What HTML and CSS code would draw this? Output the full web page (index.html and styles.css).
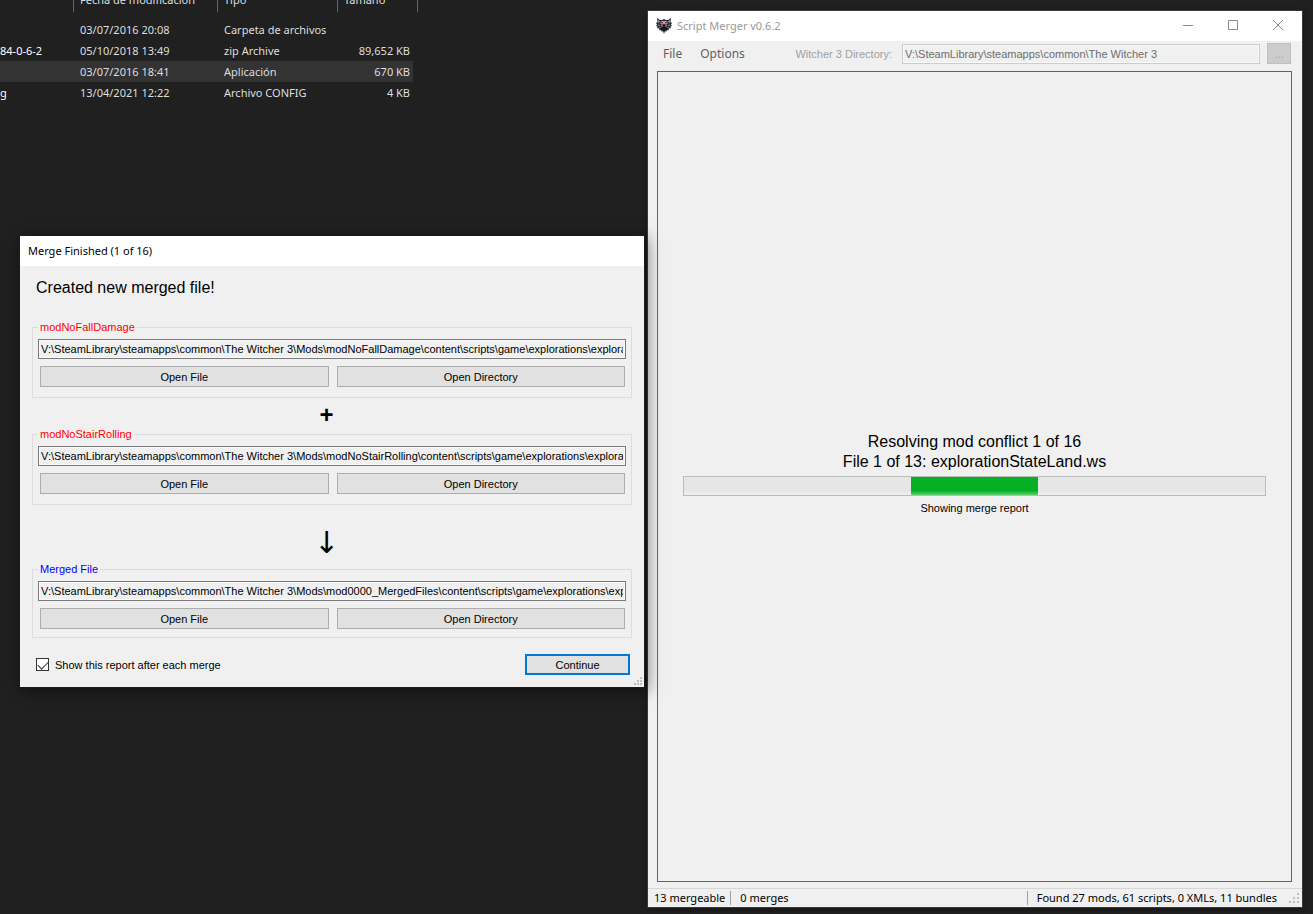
FILE: index.html
```html
<!DOCTYPE html>
<html lang="en">
<head>
<meta charset="UTF-8">
<title>Script Merger</title>
<link rel="stylesheet" href="styles.css">
</head>
<body>

<!-- file explorer -->
<div class="explorer">
	<table class="files">
		<colgroup><col class="col-name"><col class="col-date"><col class="col-type"><col class="col-size"></colgroup>
		<thead>
			<tr><th></th><th>Fecha de modificación</th><th>Tipo</th><th>Tamaño</th></tr>
		</thead>
		<tbody>
			<tr><td></td><td>03/07/2016 20:08</td><td>Carpeta de archivos</td><td></td></tr>
			<tr><td>84-0-6-2</td><td>05/10/2018 13:49</td><td>zip Archive</td><td>89,652 KB</td></tr>
			<tr class="selected"><td></td><td>03/07/2016 18:41</td><td>Aplicación</td><td>670 KB</td></tr>
			<tr><td>g</td><td>13/04/2021 12:22</td><td>Archivo CONFIG</td><td>4 KB</td></tr>
		</tbody>
	</table>
</div>

<!-- main window -->
<main class="window merger">
	<header class="titlebar inactive">
		<svg class="wolf" viewBox="0 0 16 16" width="16" height="16">
			<path fill="#2b2d35" d="M1 0l3 2 2 0 2-1 2 1h2l3-2-.5 4 1.500 1-1 1.500 1 1.500-1.500.5.5 2-2-.5-.5 2.500-1.500-.5L10 14l-1-1-1 3-1-3-1 1-1-2-1.500.5L3 10l-2 .5.5-2L0 8l1-1.500L0 5l1.500-1z"/>
			<path fill="#c5c9d2" d="M2 2l2 1.500L2.500 5zM14 2l-2 1.500L13.500 5zM5 3h2l1 1 1-1h2l-1 1H6zM1.500 6.500L5 8l-3-.5zM14.500 6.500L11 8l3-.5zM6 7l1 2-2-1zM10 7L9 9l2-1zM3 9l2 .5-1 .5zM13 9l-2 .5 1 .5z"/>
			<path fill="#e8646a" d="M3.500 5L6 4.500h4l2.500.5L10 7 8 5.500 6 7z"/>
			<path fill="#f3d4d6" d="M7 4h2L8 6z"/>
			<path fill="#0d0e12" d="M7 7h2l.5 4L8 13l-1.500-2zM4 10l2 0 0 2zM12 10h-2v2z"/>
		</svg>
		<span>Script Merger v0.6.2</span>
		<div class="captions">
			<button aria-label="Minimize"><svg width="12" height="12" viewBox="0 0 12 12"><path d="M1 6.500h10"/></svg></button>
			<button aria-label="Maximize"><svg width="12" height="12" viewBox="0 0 12 12"><path d="M1.500 1.500h9v9h-9z"/></svg></button>
			<button aria-label="Close"><svg width="12" height="12" viewBox="0 0 12 12"><path d="M1 1l10 10M11 1L1 11"/></svg></button>
		</div>
	</header>
	<div class="menubar">
		<button class="menu">File</button>
		<button class="menu">Options</button>
		<label for="gamedir">Witcher 3 Directory:</label>
		<input id="gamedir" class="path" type="text" value="V:\SteamLibrary\steamapps\common\The Witcher 3" disabled>
		<button class="browse" disabled>...</button>
	</div>
	<section class="panel">
		<p class="big">Resolving mod conflict 1 of 16</p>
		<p class="big">File 1 of 13: explorationStateLand.ws</p>
		<div class="progress" role="progressbar" aria-label="Merge progress"><div class="chunk"></div></div>
		<p>Showing merge report</p>
	</section>
	<footer class="statusbar">
		<span>13 mergeable</span>
		<span class="sep">0 merges</span>
		<span class="sep found">Found 27 mods, 61 scripts, 0 XMLs, 11 bundles</span>
		<svg class="grip" width="11" height="11" viewBox="0 0 11 11"><path d="M8 0h2v2H8zM4 4h2v2H4zM8 4h2v2H8zM0 8h2v2H0zM4 8h2v2H4zM8 8h2v2H8z"/></svg>
	</footer>
</main>

<!-- report dialog -->
<div class="window report" role="dialog" aria-labelledby="report-title">
	<header class="titlebar"><span id="report-title">Merge Finished (1 of 16)</span></header>
	<form class="content">
		<h1>Created new merged file!</h1>
		<fieldset>
			<legend>modNoFallDamage</legend>
			<input class="path" type="text" aria-label="First file" readonly value="V:\SteamLibrary\steamapps\common\The Witcher 3\Mods\modNoFallDamage\content\scripts\game\explorations\explorationStateLand.ws">
			<div class="buttons">
				<button type="button">Open File</button>
				<button type="button">Open Directory</button>
			</div>
		</fieldset>
		<div class="plus">+</div>
		<fieldset>
			<legend>modNoStairRolling</legend>
			<input class="path" type="text" aria-label="Second file" readonly value="V:\SteamLibrary\steamapps\common\The Witcher 3\Mods\modNoStairRolling\content\scripts\game\explorations\explorationStateLand.ws">
			<div class="buttons">
				<button type="button">Open File</button>
				<button type="button">Open Directory</button>
			</div>
		</fieldset>
		<div class="arrow">↓</div>
		<fieldset class="merged">
			<legend>Merged File</legend>
			<input class="path" type="text" aria-label="Merged file" readonly value="V:\SteamLibrary\steamapps\common\The Witcher 3\Mods\mod0000_MergedFiles\content\scripts\game\explorations\explorationStateLand.ws">
			<div class="buttons">
				<button type="button">Open File</button>
				<button type="button">Open Directory</button>
			</div>
		</fieldset>
		<div class="bottom">
			<label><input type="checkbox" checked>Show this report after each merge</label>
			<button type="button" class="default">Continue</button>
		</div>
	</form>
	<svg class="grip" width="9" height="9" viewBox="0 0 9 9"><path d="M6 0h2v2H6zM3 3h2v2H3zM6 3h2v2H6zM0 6h2v2H0zM3 6h2v2H3zM6 6h2v2H6z"/></svg>
</div>

</body>
</html>
```
FILE: styles.css
```css
* {
  box-sizing: border-box;
}
body {
  margin: 0;
  height: 100vh;
  overflow: hidden;
  position: relative;
  background-color: #202020;
  font: 11px/14px "Liberation Sans", Arial, sans-serif;
  color: #000;
}
button, input {
  font: inherit;
  color: inherit;
}
p, h1 {
  margin: 0;
}

/* file explorer */
.explorer {
  overflow: hidden;
}
.files {
  width: 418px;
  margin-top: -13px;
  table-layout: fixed;
  border-collapse: separate;
  border-spacing: 0;
  font: 11px/20px "Noto Sans", "Open Sans", sans-serif;
  color: #dedede;
}
.col-name { width: 74px; }
.col-date { width: 144px; }
.col-type { width: 120px; }
.files th {
  height: 25px;
  padding: 0 0 0 6px;
  border-right: 1px solid #636363;
  font-weight: normal;
  text-align: left;
  white-space: nowrap;
}
.files tbody::before {
  content: "";
  display: block;
  height: 7px;
}
.files td {
  height: 21px;
  padding: 0 0 0 6px;
  white-space: nowrap;
}
.files td:first-child {
  padding-left: 0;
  color: #fff;
}
.files td:last-child {
  padding-right: 3px;
  border-right: 5px solid #202020;
  text-align: right;
}
.selected {
  background-color: #333;
}

/* windows */
.window {
  position: absolute;
  display: flex;
  flex-direction: column;
  background-color: #f0f0f0;
}
.merger {
  top: 11px;
  right: 11px;
  bottom: 7px;
  left: 648px;
  box-shadow: 0 0 0 1px #3a3a3a, 0 2px 8px #0006;
}
.report {
  top: 236px;
  left: 20px;
  width: 624px;
  box-shadow: 0 0 0 1px #1c1c1c, 2px 3px 14px 1px #0008;
}
.titlebar {
  display: flex;
  align-items: center;
  height: 30px;
  padding-left: 8px;
  background-color: #fff;
  font-family: "Noto Sans", "Open Sans", sans-serif;
}
.inactive {
  color: #999;
}
.wolf {
  margin-right: 5px;
}
.captions {
  display: flex;
  margin-left: auto;
  padding: 0 2px 2px 0;
}
.captions button {
  width: 45px;
  height: 28px;
  padding: 0;
  border: 0;
  background: none;
}
.captions svg {
  display: block;
  margin: auto;
  fill: none;
  stroke: #888;
}
.path {
  display: block;
  width: 100%;
  height: 20px;
  padding: 0 2px;
  border: 1px solid #7a7a7a;
  background-color: #f0f0f0;
  box-shadow: inset 0 0 0 1px #fafafa;
}
.grip {
  fill: #bfbfbf;
}

/* main window */
.menubar {
  display: flex;
  align-items: center;
  height: 30px;
  padding: 0 11px 5px 6px;
}
.menu {
  padding: 0 9px;
  border: 0;
  background: none;
  font: 12px/18px "Noto Sans", "Open Sans", sans-serif;
  color: #5f5f5f;
}
.menubar label {
  margin-left: auto;
  padding-right: 10px;
  color: #a0a0a0;
}
.menubar .path {
  width: 358px;
  border-color: #ccc;
  color: #6d6d6d;
}
.browse {
  width: 24px;
  height: 21px;
  margin-left: 7px;
  padding: 0;
  border: 1px solid #bfbfbf;
  background-color: #ccc;
  color: #a0a0a0;
}
.panel {
  flex: 1;
  display: flex;
  flex-direction: column;
  justify-content: center;
  margin: 0 10px 6px 9px;
  padding: 0 25px 7px;
  border: 1px solid #646464;
  text-align: center;
}
.big, .report h1 {
  font-size: 16px;
  line-height: 20px;
  font-weight: normal;
}
.progress {
  height: 20px;
  margin: 4px 0 5px;
  border: 1px solid #bcbcbc;
  background: linear-gradient(#e6e6e6 75%, #f0f0f0);
}
.chunk {
  width: 22%;
  height: 100%;
  margin-left: 39%;
  background: linear-gradient(#06b025 75%, #5dcc70);
}
.statusbar {
  display: flex;
  align-items: center;
  height: 19px;
  padding: 0 2px 0 6px;
  border-top: 1px solid #d7d7d7;
  font-family: "Noto Sans", "Open Sans", sans-serif;
}
.sep {
  margin-left: 5px;
  padding-left: 9px;
  border-left: 1px solid #a0a0a0;
}
.found {
  margin-left: auto;
}
.statusbar .grip {
  margin-left: 12px;
}

/* report dialog */
.content {
  padding: 12px 12px 12px;
}
.report h1 {
  margin: 0 4px 22px;
}
fieldset {
  min-width: 0;
  margin: 0;
  padding: 5px 5px 10px;
  border: 1px solid #dcdcdc;
}
.merged {
  padding-bottom: 8px;
}
legend {
  padding: 0 2px;
  color: #f00;
}
.merged legend {
  color: #00f;
}
.buttons {
  display: flex;
  gap: 8px;
  margin: 7px 1px 0 2px;
}
.buttons button, .default {
  height: 21px;
  padding: 0;
  border: 1px solid #adadad;
  background-color: #e1e1e1;
}
.buttons button {
  flex: 1;
}
.plus, .arrow {
  display: flex;
  align-items: center;
  justify-content: center;
  padding-right: 11px;
}
.plus {
  height: 29px;
  padding-top: 5px;
  font-size: 24px;
  font-weight: bold;
}
.arrow {
  height: 57px;
  padding-top: 18px;
  font-family: "DejaVu Sans", sans-serif;
  font-size: 30px;
}
.bottom {
  display: flex;
  align-items: center;
  justify-content: space-between;
  margin: 16px 2px 0 4px;
}
.bottom label {
  display: flex;
  align-items: center;
  gap: 6px;
}
.bottom input {
  appearance: none;
  width: 13px;
  height: 13px;
  margin: 0;
  border: 1px solid #333;
  background-color: #fff;
}
.bottom input:checked::before {
  content: "";
  display: block;
  width: 9px;
  height: 5px;
  margin: 2px 1px;
  border: solid #333;
  border-width: 0 0 1px 1px;
  transform: rotate(-45deg);
}
.default {
  width: 105px;
  border: 2px solid #0078d7;
}
.report .grip {
  position: absolute;
  right: 1px;
  bottom: 1px;
}
```
